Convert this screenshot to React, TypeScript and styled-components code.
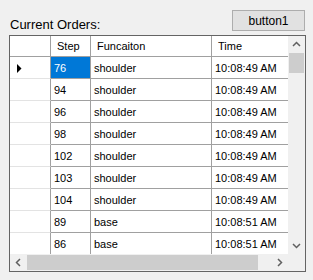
import React from 'react';
import styled, {createGlobalStyle} from "styled-components";

const GlobalStyle = createGlobalStyle`
  body {
    margin: 0;
    background: #f0f0f0;
    font-family: "Liberation Sans", Arial, sans-serif;
  }
`;

const Window = styled.div`
  width: 313px;
  height: 280px;
  box-sizing: border-box;
  padding: 10px 8px 0 9px;
  background: #f0f0f0;
`;

const TopRow = styled.div`
  display: flex;
  justify-content: space-between;
  height: 25px;
`;

const Label = styled.div`
  margin: 7px 0 0 1px;
  font-size: 13px;
  line-height: 15px;
  color: #000;
`;

const Button = styled.button`
  width: 73px;
  height: 21px;
  margin: 0;
  padding: 0;
  border: 1px solid #adadad;
  background: #e1e1e1;
  font-family: "Liberation Sans", Arial, sans-serif;
  font-size: 12px;
  color: #000;
`;

const GridFrame = styled.div`
  width: 297px;
  height: 237px;
  box-sizing: border-box;
  border: 1px solid #646464;
  background: #fff;
  display: grid;
  grid-template-columns: 278px 17px;
  grid-template-rows: 218px 17px;
`;

const Viewport = styled.div`
  overflow: hidden;
`;

const Row = styled.div<{$header?: boolean}>`
  display: flex;
  width: 296px;
  height: ${p => p.$header ? 21 : 22}px;
`;

const Cell = styled.div<{$w: number, $header?: boolean, $selected?: boolean}>`
  flex: none;
  width: ${p => p.$w}px;
  box-sizing: border-box;
  display: flex;
  align-items: center;
  padding: ${p => p.$header ? '0 0 0 6px' : '1px 0 0 3px'};
  border-right: 1px solid #a0a0a0;
  border-bottom: 1px solid #a0a0a0;
  background: ${p => p.$selected ? '#0078d7' : '#fff'};
  color: ${p => p.$selected ? '#fff' : '#000'};
  font-size: 11px;
  white-space: nowrap;
  overflow: hidden;
`;

const RowHeader = styled.div<{$header?: boolean}>`
  flex: none;
  width: 41px;
  box-sizing: border-box;
  display: flex;
  align-items: center;
  padding: 1px 0 0 7px;
  border-right: 1px solid #a0a0a0;
  border-bottom: 1px solid ${p => p.$header ? '#a0a0a0' : '#e3e3e3'};
`;

const VScroll = styled.div`
  display: flex;
  flex-direction: column;
  background: #f0f0f0;
`;

const HScroll = styled.div`
  display: flex;
  background: #f0f0f0;
`;

const ArrowButton = styled.div`
  flex: none;
  width: 17px;
  height: 17px;
  display: flex;
  align-items: center;
  justify-content: center;
`;

const Track = styled.div<{$vertical?: boolean}>`
  flex: 1;
  display: flex;
  flex-direction: ${p => p.$vertical ? 'column' : 'row'};
`;

const Thumb = styled.div<{$vertical?: boolean, $size: number}>`
  flex: none;
  background: #cdcdcd;
  ${p => p.$vertical
    ? `height: ${p.$size}px; margin: 0 1px;`
    : `width: ${p.$size}px; margin: 1px 0;`}
`;

const Corner = styled.div`
  background: #f0f0f0;
`;

const Chevron = ({dir}: {dir: 'up' | 'down' | 'left' | 'right'}) => {
  const points = {
    up: '5,10 8.5,6.5 12,10',
    down: '5,7 8.5,10.5 12,7',
    left: '10,5 6.5,8.5 10,12',
    right: '7,5 10.5,8.5 7,12',
  }[dir];
  return (
    <svg width="17" height="17" viewBox="0 0 17 17">
      <polyline points={points} fill="none" stroke="#606060" strokeWidth="1.5"/>
    </svg>
  );
};

const CurrentRowMark = () => (
  <svg width="5" height="9" viewBox="0 0 5 9">
    <polygon points="0,0 4.5,4.5 0,9" fill="#000"/>
  </svg>
);

interface IOrder {
  step: number,
  func: string,
  time: string
}

const orders: IOrder[] = [
  {step: 76, func: 'shoulder', time: '10:08:49 AM'},
  {step: 94, func: 'shoulder', time: '10:08:49 AM'},
  {step: 96, func: 'shoulder', time: '10:08:49 AM'},
  {step: 98, func: 'shoulder', time: '10:08:49 AM'},
  {step: 102, func: 'shoulder', time: '10:08:49 AM'},
  {step: 103, func: 'shoulder', time: '10:08:49 AM'},
  {step: 104, func: 'shoulder', time: '10:08:49 AM'},
  {step: 89, func: 'base', time: '10:08:51 AM'},
  {step: 86, func: 'base', time: '10:08:51 AM'},
];

const App: React.FC = () => {
  return (
    <Window>
      <GlobalStyle/>
      <TopRow>
        <Label>Current Orders:</Label>
        <Button>button1</Button>
      </TopRow>
      <GridFrame>
        <Viewport>
          <Row $header>
            <RowHeader $header/>
            <Cell $header $w={40}>Step</Cell>
            <Cell $header $w={121}>Funcaiton</Cell>
            <Cell $header $w={94}>Time</Cell>
          </Row>
          {orders.map((order, i) => (
            <Row key={i}>
              <RowHeader>{i === 0 && <CurrentRowMark/>}</RowHeader>
              <Cell $w={40} $selected={i === 0}>{order.step}</Cell>
              <Cell $w={121}>{order.func}</Cell>
              <Cell $w={94}>{order.time}</Cell>
            </Row>
          ))}
        </Viewport>
        <VScroll>
          <ArrowButton><Chevron dir="up"/></ArrowButton>
          <Track $vertical>
            <Thumb $vertical $size={20}/>
          </Track>
          <ArrowButton><Chevron dir="down"/></ArrowButton>
        </VScroll>
        <HScroll>
          <ArrowButton><Chevron dir="left"/></ArrowButton>
          <Track>
            <Thumb $size={231}/>
          </Track>
          <ArrowButton><Chevron dir="right"/></ArrowButton>
        </HScroll>
        <Corner/>
      </GridFrame>
    </Window>
  );
};

export default App;
